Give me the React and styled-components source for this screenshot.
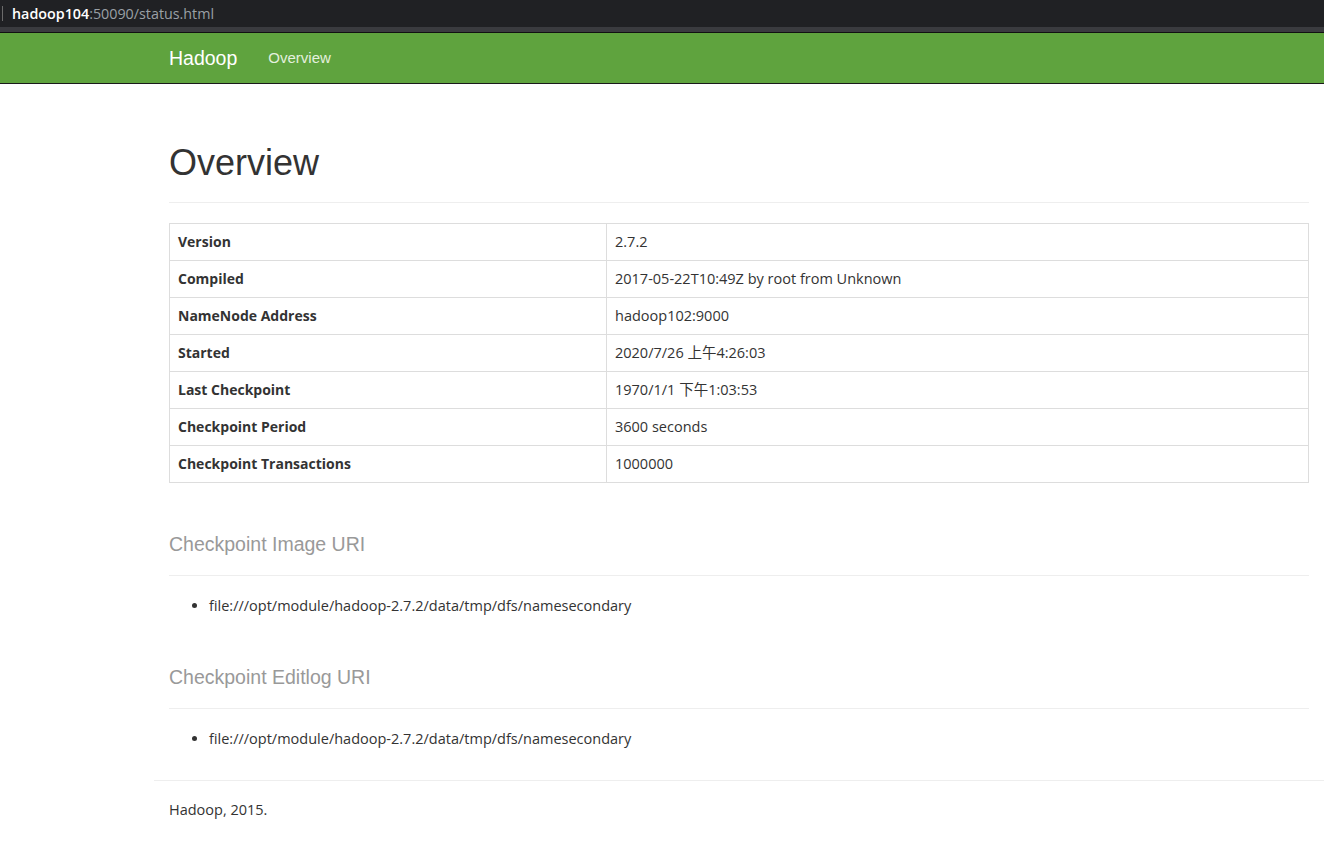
import React from 'react';
import styled, { createGlobalStyle } from 'styled-components';

const GlobalStyle = createGlobalStyle`
  html, body {
    margin: 0;
    padding: 0;
    background: #fff;
  }
  body {
    font-family: "Open Sans", "Noto Sans CJK SC", sans-serif;
    font-size: 14.5px;
    line-height: 20px;
    color: #333;
    overflow: hidden;
  }
`;

const AddressBar = styled.div`
  height: 27px;
  background: #202124;
  display: flex;
  align-items: center;
  padding-left: 12px;
  position: relative;
  font-family: "Open Sans", sans-serif;
  font-size: 14.3px;
  &::before {
    content: '';
    position: absolute;
    left: 2px;
    top: 6px;
    width: 1px;
    height: 15px;
    background: #6b6b6b;
  }
`;

const Host = styled.span`
  color: #fff;
  font-weight: 600;
`;

const UrlRest = styled.span`
  color: #9aa0a6;
`;

const ChromeStrip = styled.div`
  height: 5px;
  background: #3a3b3f;
  border-bottom: 1px solid #111;
`;

const Navbar = styled.nav`
  height: 50px;
  background: #5fa33e;
  border-bottom: 1px solid #1a1a1a;
`;

const NavInner = styled.div`
  margin-left: 154px;
  width: 1170px;
  padding: 0 15px;
  box-sizing: border-box;
  display: flex;
  align-items: center;
  height: 100%;
`;

const Brand = styled.a`
  font-family: "Liberation Sans", Arial, sans-serif;
  font-size: 19.5px;
  color: #fff;
  text-decoration: none;
  margin-right: 31px;
`;

const NavLink = styled.a`
  font-family: "Liberation Sans", Arial, sans-serif;
  font-size: 15px;
  color: #e4f0de;
  text-decoration: none;
`;

const Container = styled.div`
  margin-left: 154px;
  width: 1170px;
  padding: 0 15px;
  box-sizing: border-box;
`;

const PageHeader = styled.div`
  margin: 59px 0 20px;
  padding-bottom: 9px;
  border-bottom: 1px solid #eee;
`;

const Title = styled.h1`
  font-family: "Liberation Sans", Arial, sans-serif;
  font-weight: 400;
  font-size: 36px;
  line-height: 40px;
  margin: 20px 0 10px;
  color: #333;
`;

const Table = styled.table`
  width: 100%;
  border-collapse: collapse;
  border: 1px solid #ddd;
  margin-bottom: 20px;
`;

const Th = styled.th`
  text-align: left;
  font-weight: 700;
  font-size: 14px;
  padding: 8px;
  border: 1px solid #ddd;
  width: 420px;
  line-height: 20px;
`;

const Td = styled.td`
  padding: 8px;
  border: 1px solid #ddd;
  line-height: 20px;
`;

const Section = styled.div`
  margin-top: 50px;
`;

const SectionTitle = styled.h2`
  font-family: "Liberation Sans", Arial, sans-serif;
  font-weight: 400;
  font-size: 19.5px;
  line-height: 22px;
  color: #999;
  margin: 0;
`;

const Rule = styled.hr`
  border: 0;
  border-top: 1px solid #eee;
  margin: 20px 0;
`;

const List = styled.ul`
  margin: 0;
  padding-left: 40px;
`;

const Footer = styled.div`
  margin-top: 31px;
  margin-left: 154px;
  border-top: 1px solid #eee;
  padding: 19px 15px;
`;

const rows = [
  ['Version', '2.7.2'],
  ['Compiled', '2017-05-22T10:49Z by root from Unknown'],
  ['NameNode Address', 'hadoop102:9000'],
  ['Started', '2020/7/26 上午4:26:03'],
  ['Last Checkpoint', '1970/1/1 下午1:03:53'],
  ['Checkpoint Period', '3600 seconds'],
  ['Checkpoint Transactions', '1000000'],
];

const uri = 'file:///opt/module/hadoop-2.7.2/data/tmp/dfs/namesecondary';

export default function App() {
  return (
    <>
      <GlobalStyle />
      <AddressBar>
        <Host>hadoop104</Host>
        <UrlRest>:50090/status.html</UrlRest>
      </AddressBar>
      <ChromeStrip />
      <Navbar>
        <NavInner>
          <Brand href="#">Hadoop</Brand>
          <NavLink href="#">Overview</NavLink>
        </NavInner>
      </Navbar>
      <Container>
        <PageHeader>
          <Title>Overview</Title>
        </PageHeader>
        <Table>
          <tbody>
            {rows.map(([k, v]) => (
              <tr key={k}>
                <Th>{k}</Th>
                <Td>{v}</Td>
              </tr>
            ))}
          </tbody>
        </Table>
        <Section>
          <SectionTitle>Checkpoint Image URI</SectionTitle>
          <Rule />
          <List>
            <li>{uri}</li>
          </List>
        </Section>
        <Section>
          <SectionTitle>Checkpoint Editlog URI</SectionTitle>
          <Rule />
          <List>
            <li>{uri}</li>
          </List>
        </Section>
      </Container>
      <Footer>Hadoop, 2015.</Footer>
    </>
  );
}
